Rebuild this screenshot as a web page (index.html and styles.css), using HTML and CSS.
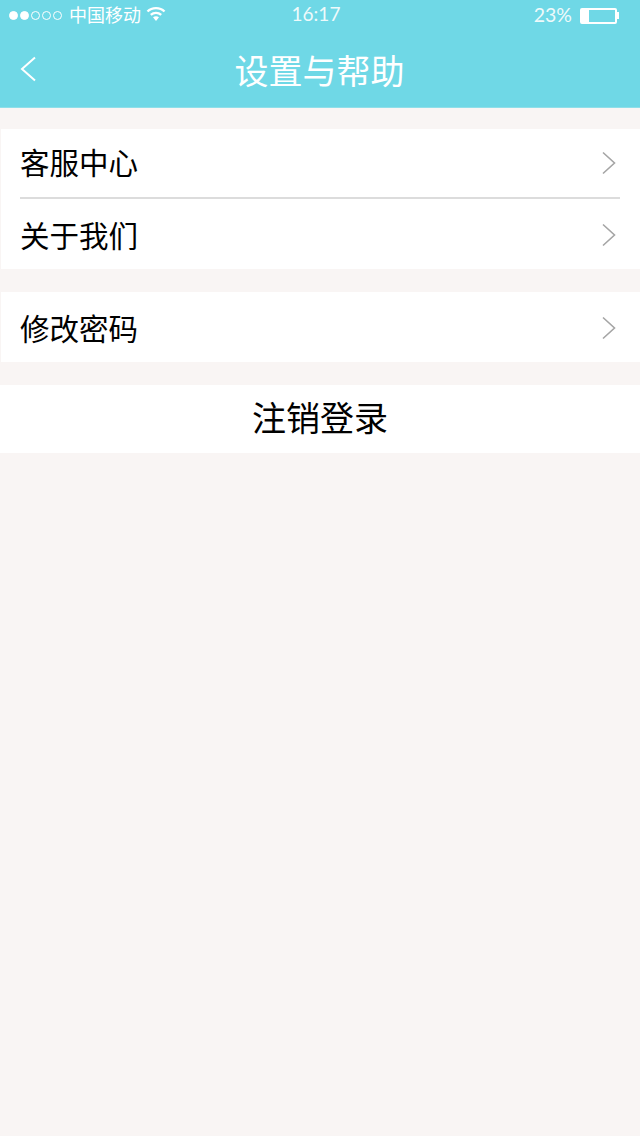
FILE: index.html
```html
<!DOCTYPE html>
<html lang="zh-CN">
<head>
    <meta charset="UTF-8">
    <meta name="viewport" content="width=device-width, initial-scale=1.0">
    <title>设置与帮助</title>
    <link rel="stylesheet" href="styles.css">
</head>
<body>

    <!-- Header -->
    <div class="header">
        <div class="status-bar">
            <div class="status-left">
                <div class="signal">
                    <span class="signal-dot on"></span>
                    <span class="signal-dot on"></span>
                    <span class="signal-dot"></span>
                    <span class="signal-dot"></span>
                    <span class="signal-dot"></span>
                </div>
                <span class="carrier">中国移动</span>
                <svg class="wifi" width="20" height="16" viewBox="0 0 20 16">
                    <path d="M1.5 5.5 C6 1 14 1 18.5 5.5" fill="none" stroke="#fff" stroke-width="2.4"/>
                    <path d="M4.8 8.8 C7.8 6.2 12.2 6.2 15.2 8.8" fill="none" stroke="#fff" stroke-width="2.4"/>
                    <path d="M7 11.2 C8.6 9.9 11.4 9.9 13 11.2 L10 15 Z" fill="#fff"/>
                </svg>
            </div>
            <div class="status-time">16:17</div>
            <div class="status-right">
                <span class="battery-text">23%</span>
                <div class="battery">
                    <div class="battery-level"></div>
                </div>
                <div class="battery-cap"></div>
            </div>
        </div>
        <div class="nav-bar">
            <svg class="back" width="18" height="26" viewBox="0 0 18 26">
                <path d="M16 1.5 L3 13 L16 24.5" fill="none" stroke="#fff" stroke-width="2"/>
            </svg>
            <div class="title">设置与帮助</div>
        </div>
    </div>

    <!-- Menu -->
    <div class="group">
        <div class="row row-first">
            <span>客服中心</span>
            <svg class="arrow" width="16" height="24" viewBox="0 0 16 24">
                <path d="M2 1.5 L13.5 12 L2 22.5" fill="none" stroke="#a5a5a5" stroke-width="1.6"/>
            </svg>
        </div>
        <div class="row">
            <span>关于我们</span>
            <svg class="arrow" width="16" height="24" viewBox="0 0 16 24">
                <path d="M2 1.5 L13.5 12 L2 22.5" fill="none" stroke="#a5a5a5" stroke-width="1.6"/>
            </svg>
        </div>
    </div>

    <div class="group">
        <div class="row">
            <span>修改密码</span>
            <svg class="arrow" width="16" height="24" viewBox="0 0 16 24">
                <path d="M2 1.5 L13.5 12 L2 22.5" fill="none" stroke="#a5a5a5" stroke-width="1.6"/>
            </svg>
        </div>
    </div>

    <div class="logout">注销登录</div>

</body>
</html>
```

FILE: styles.css
```css
body, html {
    margin: 0;
    padding: 0;
    height: 100%;
    font-family: "Liberation Sans", "Noto Sans CJK SC", sans-serif;
    background-color: #f9f5f4;
    overflow: hidden;
}

/* Header */
.header {
    height: 107px;
    background-color: #6fd8e6;
    border-bottom: 1px solid #8fdfe9;
    color: #fff;
}

.status-bar {
    height: 31px;
    padding: 0 21px 0 9px;
    display: flex;
    align-items: center;
    justify-content: space-between;
    position: relative;
}

.status-left, .status-right {
    display: flex;
    align-items: center;
}

.signal {
    display: flex;
    gap: 2px;
}

.signal-dot {
    width: 9px;
    height: 9px;
    border: 1px solid #fff;
    border-radius: 50%;
    box-sizing: border-box;
}

.signal-dot.on {
    background-color: #fff;
}

.carrier {
    font-size: 18px;
    margin-left: 7px;
    margin-top: -3px;
}

.wifi {
    margin-left: 5px;
    margin-top: -4px;
}

.status-time {
    position: absolute;
    left: 0;
    right: 8px;
    text-align: center;
    font-family: Lato, sans-serif;
    font-size: 19px;
    color: #eefafb;
    margin-top: -4px;
}

.battery-text {
    font-family: Lato, sans-serif;
    font-size: 19.5px;
    color: #eefafb;
    margin-right: 8px;
    margin-top: -2px;
}

.battery {
    width: 37px;
    height: 16px;
    border: 2px solid #fff;
    border-radius: 2px;
    box-sizing: border-box;
}

.battery-level {
    width: 7px;
    height: 100%;
    background-color: #fff;
}

.battery-cap {
    width: 2px;
    height: 7px;
    background-color: #fff;
}

.nav-bar {
    height: 76px;
    display: flex;
    align-items: center;
    justify-content: center;
    position: relative;
}

.back {
    position: absolute;
    left: 19px;
    top: 25px;
}

.title {
    font-size: 34px;
    margin-right: 1px;
}

/* Menu */
.group {
    margin-top: 21px;
    margin-left: 1px;
    background-color: #fff;
}

.group + .group {
    margin-top: 23px;
}

.row {
    height: 70px;
    margin-left: 19px;
    margin-right: 20px;
    display: flex;
    align-items: center;
    justify-content: space-between;
    font-size: 29.5px;
    color: #000;
}

.row-first {
    height: 64px;
    padding-bottom: 4px;
    border-bottom: 2px solid #dcdcdc;
}

.arrow {
    margin-right: 3px;
    margin-top: 2px;
}

.row-first .arrow {
    margin-top: 4px;
}

.logout {
    margin-top: 23px;
    height: 68px;
    line-height: 68px;
    background-color: #fff;
    text-align: center;
    font-size: 34px;
    color: #000;
}
```
